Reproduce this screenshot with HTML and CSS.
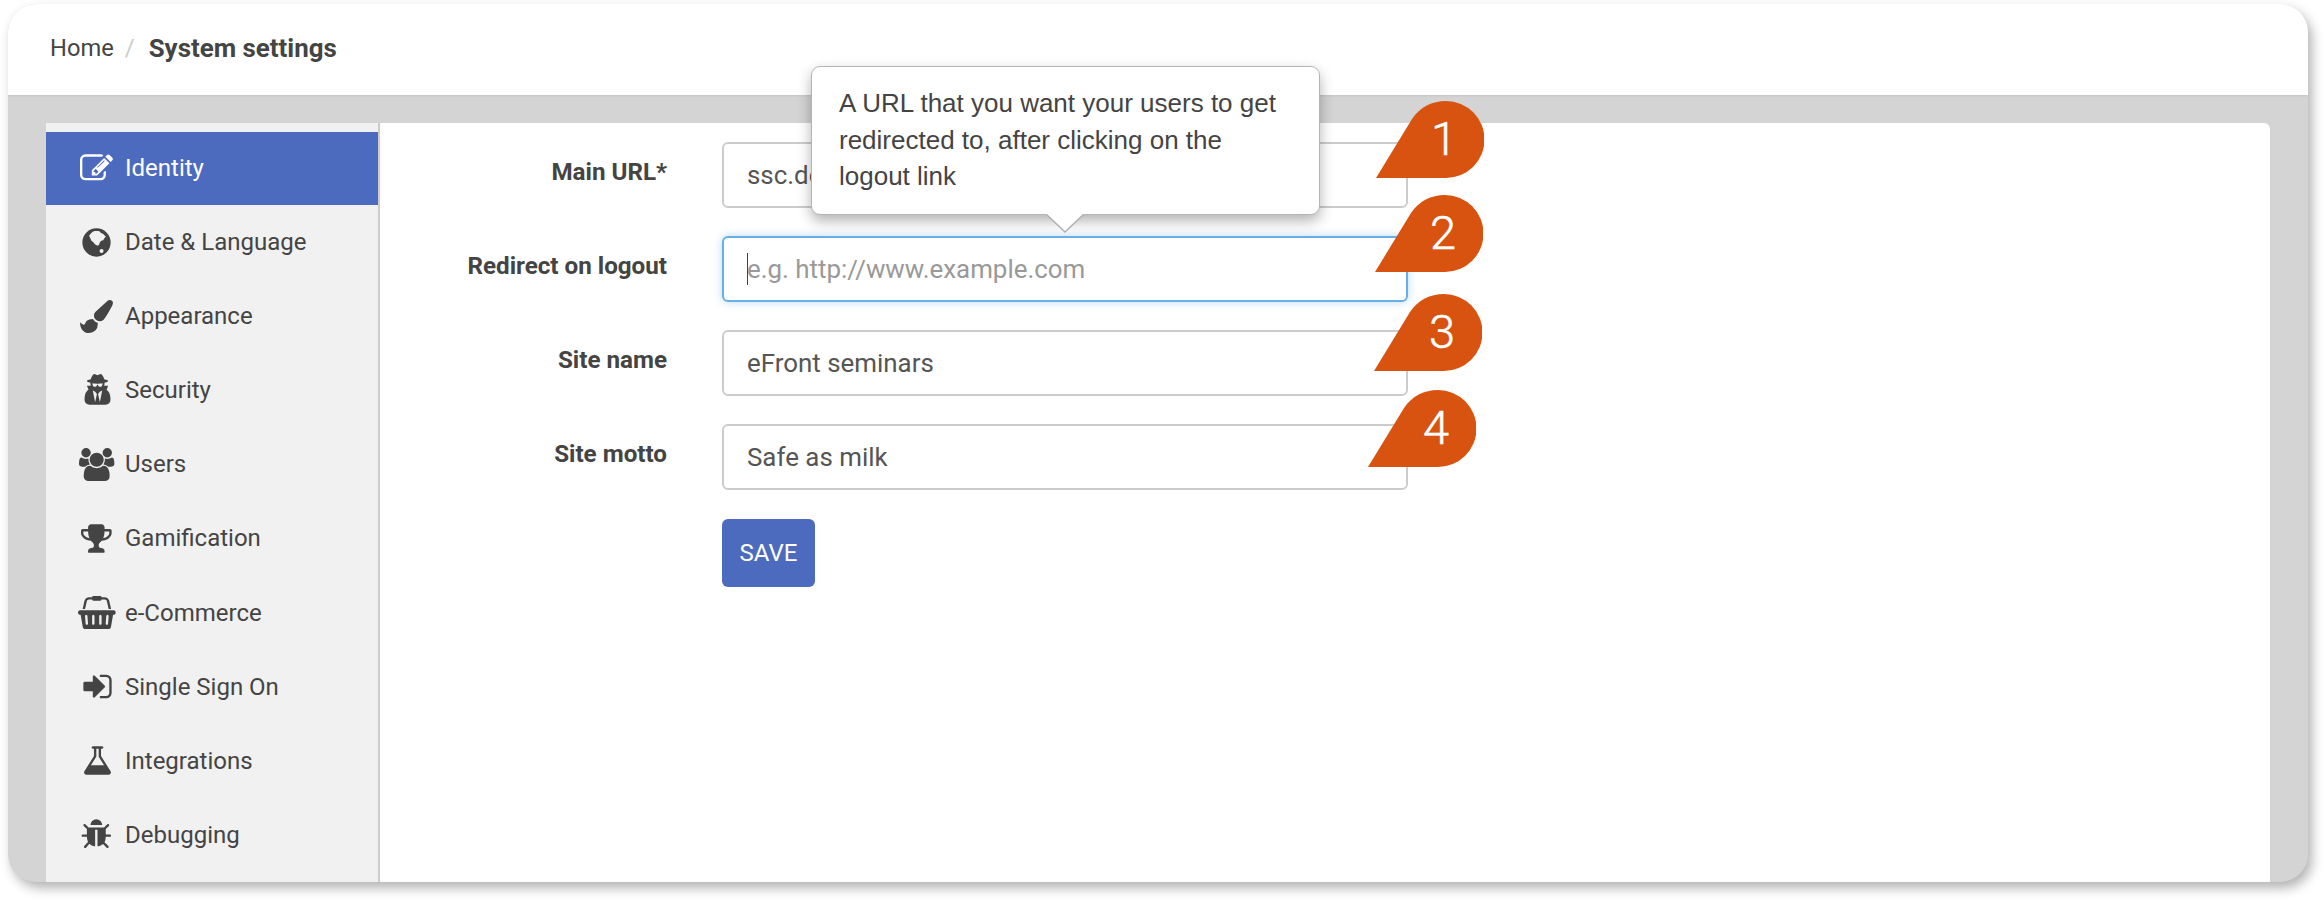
FILE: index.html
```html
<!DOCTYPE html>
<html lang="en">
<head>
<meta charset="utf-8">
<title>System settings</title>
<link rel="stylesheet" href="styles.css">
</head>
<body>
<div class="window">
  <header class="topbar">
    <span class="crumb">Home</span><span class="sep">/</span><strong class="crumb-current">System settings</strong>
  </header>
  <div class="panel">
    <nav class="sidebar">
      <a class="item active"><span class="ico"><svg viewBox="0 0 1792 1792"><path d="M888 1184l116-116-152-152-116 116v56h96v96h56zm440-720q-16-16-33 1l-350 350q-17 17-1 33t33-1l350-350q17-17 1-33zm80 594v190q0 119-84.500 203.500t-203.500 84.500h-832q-119 0-203.500-84.500t-84.500-203.500v-832q0-119 84.500-203.500t203.500-84.500h832q63 0 117 25 15 7 18 23 3 17-9 29l-49 49q-14 14-32 8-23-6-45-6h-832q-66 0-113 47t-47 113v832q0 66 47 113t113 47h832q66 0 113-47t47-113v-126q0-13 9-22l64-64q15-15 35-7t20 29zm-96-738l288 288-672 672h-288v-288zm444 132l-92 92-288-288 92-92q28-28 68-28t68 28l152 152q28 28 28 68t-28 68z"/></svg></span>Identity</a>
      <a class="item"><span class="ico"><svg viewBox="0 0 1792 1792"><path fill-rule="evenodd" d="M896 128a768 768 0 1 0 0 1536a768 768 0 1 0 0-1536zM713 292C830 262 960 262 1079 292L1120 370L1262 438L1408 585L1340 640L1262 768L1150 800L1079 896L1040 990L987 1079L900 1050L804 987L740 900L621 805L560 670L493 530L600 390zM1170 1243a110 110 0 1 1 0 220a110 110 0 1 1 0-220z"/></svg></span>Date &amp; Language</a>
      <a class="item"><span class="ico"><svg viewBox="0 0 1792 1792"><path d="M1615 0q70 0 122.500 46.500t52.500 116.500q0 63-45 151-332 629-465 752-97 91-218 91-126 0-216.500-92.500t-90.500-219.500q0-128 92-212l638-579q59-54 130-54zm-909 1034q39 76 106.500 130t150.500 76l1 71q4 213-129.500 347t-348.500 134q-123 0-218-46.500t-152.500-127.500-86.500-183-29-220q7 5 41 30t62 44.500 59 36.500 46 17q41 0 55-37 25-66 57.500-112.500t69.500-76 88-47.500 103-25.500 125-10.500z"/></svg></span>Appearance</a>
      <a class="item"><span class="ico"><svg viewBox="0 0 1664 1792"><path d="M704 1536l96-448-96-128-128-64zm256 0l128-640-128 64-96 128zm160-1010q-2-4-4-6-10-8-96-8-70 0-167 19-7 2-21 2t-21-2q-97-19-167-19-86 0-96 8-2 2-4 6 2 18 4 27 2 3 7.500 6.500t7.500 10.500q2 4 7.500 20.500t7 20.500 7.500 17 8.500 17 9 14 12 13.500 14 9.500 17.500 8 20.500 4 24.500 2q36 0 59-12.500t32.500-30 14.500-34.500 11.500-29.500 17.500-12.500h12q11 0 17.500 12.500t11.500 29.500 14.500 34.500 32.500 30 59 12.500q13 0 24.500-2t20.500-4 17.500-8 14-9.500 12-13.500 9-14 8.500-17 7.500-17 7-20.500 7.500-20.500q2-7 7.500-10.500t7.500-6.500q2-9 4-27zm416 879q0 121-73 190t-194 69h-874q-121 0-194-69t-73-190q0-61 4.500-118t19-125.500 37.500-123.500 63.500-103.500 93.500-74.500l-90-220h214q-22-64-22-128 0-12 2-32-194-40-194-96 0-57 210-99 17-62 51.500-134t70.500-114q32-37 76-37 30 0 84 31t84 31 84-31 84-31q44 0 76 36 36 42 70.500 114t51.500 134q210 42 210 99 0 56-194 96 7 81-20 160h214l-82 225q63 33 107.500 96.500t65.500 143.500 29 151.500 8 148.500z" transform="translate(64 0)"/></svg></span>Security</a>
      <a class="item"><span class="ico"><svg viewBox="0 0 1920 1792"><path d="M593 896q-162 5-265 128h-134q-82 0-138-40.500t-56-118.500q0-353 124-353 6 0 43.500 21t97.500 42.500 119 21.500q67 0 133-23-5 37-5 66 0 139 81 256zm1071 637q0 120-73 189.500t-194 69.500h-874q-121 0-194-69.500t-73-189.500q0-53 3.500-103.500t14-109 26.500-108.500 43-97.500 62-81 85.500-53.500 111.500-20q10 0 43 21.500t73 48 107 48 135 21.500 135-21.500 107-48 73-48 43-21.500q61 0 111.500 20t85.500 53.500 62 81 43 97.500 26.500 108.500 14 109 3.500 103.500zm-1024-1277q0 106-75 181t-181 75-181-75-75-181 75-181 181-75 181 75 75 181zm704 384q0 159-112.500 271.500t-271.500 112.500-271.500-112.500-112.500-271.500 112.500-271.500 271.500-112.500 271.500 112.500 112.500 271.500zm576 225q0 78-56 118.500t-138 40.500h-134q-103-123-265-128 81-117 81-256 0-29-5-66 66 23 133 23 59 0 119-21.500t97.500-42.500 43.500-21q124 0 124 353zm-128-609q0 106-75 181t-181 75-181-75-75-181 75-181 181-75 181 75 75 181z"/></svg></span>Users</a>
      <a class="item"><span class="ico"><svg viewBox="0 0 1664 1792"><path d="M522 883q-74-162-74-371h-256v96q0 78 94.500 162t235.500 113zm1078-275v-96h-256q0 209-74 371 141-29 235.500-113t94.500-162zm128-128v128q0 71-41.500 143t-112 130-173 97.500-215.500 44.500q-42 54-95 95-38 34-52.500 72.500t-14.500 89.500q0 54 30.500 91t97.500 37q75 0 133.500 45.500t58.500 114.500v64q0 14-9 23t-23 9h-832q-14 0-23-9t-9-23v-64q0-69 58.500-114.500t133.500-45.500q67 0 97.500-37t30.500-91q0-51-14.500-89.500t-52.500-72.500q-53-41-95-95-113-5-215.500-44.500t-173-97.500-112-130-41.500-143v-128q0-40 28-68t68-28h288v-96q0-66 47-113t113-47h576q66 0 113 47t47 113v96h288q40 0 68 28t28 68z" transform="translate(-64 0)"/></svg></span>Gamification</a>
      <a class="item"><span class="ico"><svg viewBox="0 0 2048 1792"><path d="M1920 768q53 0 90.500 37.500t37.500 90.500-37.500 90.500-90.500 37.500h-15l-115 662q-8 46-44 76t-82 30h-1280q-46 0-82-30t-44-76l-115-662h-15q-53 0-90.500-37.500t-37.500-90.500 37.500-90.500 90.500-37.500h1792zm-1435 800q26-2 43.500-22.500t15.500-46.500l-32-416q-2-26-22.500-43.500t-46.500-15.500-43.500 22.500-15.500 46.500l32 416q2 25 20.500 42t43.500 17h5zm411-64v-416q0-26-19-45t-45-19-45 19-19 45v416q0 26 19 45t45 19 45-19 19-45zm384 0v-416q0-26-19-45t-45-19-45 19-19 45v416q0 26 19 45t45 19 45-19 19-45zm352 5l32-416q2-26-15.500-46.500t-43.500-22.500-46.500 15.500-22.500 43.500l-32 416q-2 26 15.500 46.500t43.500 22.500h5q25 0 43.500-17t20.500-42zm-1156-1217l-93 412h-132l101-441q19-88 89-143.500t160-55.500h167q0-26 19-45t45-19h384q26 0 45 19t19 45h167q90 0 160 55.500t89 143.500l101 441h-132l-93-412q-11-44-45.500-72t-79.500-28h-167q0 26-19 45t-45 19h-384q-26 0-45-19t-19-45h-167q-45 0-79.500 28t-45.500 72z"/></svg></span>e-Commerce</a>
      <a class="item"><span class="ico"><svg viewBox="0 0 1664 1792"><path d="M1312 896q0 26-19 45l-544 544q-19 19-45 19t-45-19-19-45v-288h-448q-26 0-45-19t-19-45v-384q0-26 19-45t45-19h448v-288q0-26 19-45t45-19 45 19l544 544q19 19 19 45zm352-352v704q0 119-84.500 203.500t-203.500 84.500h-320q-13 0-22.500-9.500t-9.500-22.500q0-4-1-20t-.5-26.500 3-23.500 10-19.500 20.500-6.500h320q66 0 113-47t47-113v-704q0-66-47-113t-113-47h-288-11-13t-11.500-1-11.500-3-8-5.500-7-9-2-13.500q0-4-1-20t-.5-26.500 3-23.500 10-19.500 20.500-6.500h320q119 0 203.500 84.500t84.500 203.500z"/></svg></span>Single Sign On</a>
      <a class="item"><span class="ico"><svg viewBox="0 0 1664 1792"><path d="M1591 1448q56 89 21.500 152.500t-140.500 63.500h-1152q-106 0-140.500-63.500t21.500-152.500l503-793v-399h-64q-26 0-45-19t-19-45 19-45 45-19h512q26 0 45 19t19 45-19 45-45 19h-64v399zm-779-725l-272 429h712l-272-429-20-31v-436h-128v436z"/></svg></span>Integrations</a>
      <a class="item"><span class="ico"><svg viewBox="0 0 1664 1792"><path d="M1696 960q0 26-19 45t-45 19h-224q0 171-67 290l208 209q19 19 19 45t-19 45q-18 19-45 19t-45-19l-198-197q-5 5-15 13t-42 28.500-65 36.500-82 29-97 13v-896h-128v896q-51 0-101.500-13.500t-87-33-66-39-43.500-32.500l-15-14-183 207q-20 21-48 21-24 0-43-16-19-18-20.500-44.500t15.500-46.500l202-227q-58-114-58-274h-224q-26 0-45-19t-19-45 19-45 45-19h224v-294l-173-173q-19-19-19-45t19-45 45-19 45 19l173 173h844l173-173q19-19 45-19t45 19 19 45-19 45l-173 173v294h224q26 0 45 19t19 45zm-480-576h-640q0-133 93.500-226.500t226.500-93.500 226.500 93.500 93.500 226.500z" transform="translate(-64 0)"/></svg></span>Debugging</a>
    </nav>
    <main class="content">
      <div class="row">
        <label class="label">Main URL*</label>
        <div class="field">
          <input class="input" type="text" value="ssc.demo.efront.com">
          <div class="pin pin-1"><svg class="pin-shape" viewBox="0 0 108 77"><path d="M0 77L36 18C44 6 56 0 70 0A38.500 38.500 0 0 1 70 77Z"/></svg><span class="pin-num">1</span></div>
        </div>
      </div>
      <div class="row">
        <label class="label">Redirect on logout</label>
        <div class="field">
          <input class="input focus" type="text" placeholder="e.g. http://www.example.com">
          <span class="caret"></span>
          <div class="tip">A URL that you want your users to get redirected to, after clicking on the logout link</div>
          <div class="pin pin-2"><svg class="pin-shape" viewBox="0 0 108 77"><path d="M0 77L36 18C44 6 56 0 70 0A38.500 38.500 0 0 1 70 77Z"/></svg><span class="pin-num">2</span></div>
        </div>
      </div>
      <div class="row">
        <label class="label">Site name</label>
        <div class="field">
          <input class="input" type="text" value="eFront seminars">
          <div class="pin pin-3"><svg class="pin-shape" viewBox="0 0 108 77"><path d="M0 77L36 18C44 6 56 0 70 0A38.500 38.500 0 0 1 70 77Z"/></svg><span class="pin-num">3</span></div>
        </div>
      </div>
      <div class="row">
        <label class="label">Site motto</label>
        <div class="field">
          <input class="input" type="text" value="Safe as milk">
          <div class="pin pin-4"><svg class="pin-shape" viewBox="0 0 108 77"><path d="M0 77L36 18C44 6 56 0 70 0A38.500 38.500 0 0 1 70 77Z"/></svg><span class="pin-num">4</span></div>
        </div>
      </div>
      <div class="row">
        <span class="label"></span>
        <button class="save" type="button">SAVE</button>
      </div>
    </main>
  </div>
</div>
</body>
</html>
```

FILE: styles.css
```css
* { box-sizing: border-box; }
html, body { margin: 0; padding: 0; background: #fff; }
body {
  width: 2324px;
  height: 902px;
  overflow: hidden;
  padding: 4px 16px 20px 8px;
  font-family: Roboto, "Liberation Sans", sans-serif;
  font-size: 24px;
  color: #444;
}
.window {
  height: 878px;
  background: #d4d4d4;
  border-radius: 28px;
  box-shadow: 4px 6px 12px rgba(0, 0, 0, .3);
  display: flex;
  flex-direction: column;
  overflow: hidden;
}
.topbar {
  flex: 0 0 91px;
  background: #fff;
  display: flex;
  align-items: center;
  padding: 0 0 4px 42px;
  box-shadow: 0 1px 2px rgba(0, 0, 0, .08);
}
.crumb { color: #444; font-size: 23.7px; }
.sep { color: #ccc; margin: 0 14px 0 11px; }
.crumb-current { font-weight: 700; color: #444; font-size: 25.9px; }
.panel {
  flex: 1;
  margin: 28px 38px 0;
  background: #fff;
  border-radius: 6px 6px 0 0;
  display: flex;
  min-height: 0;
}
.sidebar {
  flex: 0 0 334px;
  background: #f1f1f1;
  border-right: 2px solid #ccc;
  padding-top: 9px;
  display: flex;
  flex-direction: column;
  gap: 1.1px;
}
.item {
  height: 73px;
  flex: none;
  display: flex;
  align-items: center;
  color: #444;
  padding: 0 0 1px 30px;
}
.item.active { background: #4c6bbf; color: #fff; }
.ico {
  flex: 0 0 49px;
  width: 49px;
  padding-right: 8px;
  display: flex;
  align-items: center;
  justify-content: center;
}
.ico svg {
  height: 33px;
  width: auto;
  fill: currentColor;
  overflow: visible;
  display: block;
  flex: none;
}
.content {
  flex: 1;
  padding-top: 19px;
}
.row {
  display: flex;
  gap: 55px;
  margin-bottom: 28px;
}
.label {
  flex: 0 0 287px;
  text-align: right;
  font-weight: 700;
  font-size: 24.2px;
  line-height: 34px;
  padding-top: 13px;
}
.field {
  position: relative;
  flex: 0 0 686px;
  height: 66px;
}
.input {
  display: block;
  width: 100%;
  height: 66px;
  border: 2px solid #ccc;
  border-radius: 6px;
  background: #fff;
  padding: 0 23px;
  font: inherit;
  font-size: 25.9px;
  color: #555;
  outline: none;
}
.input::placeholder { color: #999; opacity: 1; }
.input.focus {
  border-color: #66afe9;
  box-shadow: 0 0 10px rgba(102, 175, 233, .45);
}
.caret {
  position: absolute;
  left: 25px;
  top: 17px;
  width: 1px;
  height: 32px;
  background: #444;
}
.tip {
  position: absolute;
  left: 89px;
  bottom: 87px;
  width: 509px;
  height: 149px;
  padding: 18px 27px;
  background: #fff;
  border: 1px solid #b5b5b5;
  border-radius: 9px;
  box-shadow: 0 6px 14px rgba(0, 0, 0, .3);
  font-family: "Liberation Sans", Arial, sans-serif;
  font-size: 26px;
  line-height: 36.7px;
  color: #444;
  z-index: 2;
}
.tip::before,
.tip::after {
  content: "";
  position: absolute;
  left: 234px;
  border-style: solid;
  border-color: transparent;
  border-width: 18px 19px 0;
}
.tip::before { top: 148px; border-top-color: #b0b0b0; }
.tip::after { top: 146px; border-top-color: #fff; }
.pin {
  position: absolute;
  width: 108px;
  height: 77px;
  display: flex;
  align-items: center;
  justify-content: center;
  padding: 0 0 2px 28px;
  z-index: 3;
}
.pin-1 { left: 654px; top: -41px; }
.pin-2 { left: 653px; top: -41px; }
.pin-3 { left: 652px; top: -36px; }
.pin-4 { left: 646px; top: -34px; }
.pin-shape {
  position: absolute;
  left: 0;
  top: 0;
  width: 108px;
  height: 77px;
  fill: #d7530f;
}
.pin-num {
  position: relative;
  font-weight: 300;
  font-size: 47px;
  line-height: 1;
  color: #fff;
  -webkit-text-stroke: .5px #fff;
}
.save {
  width: 93px;
  height: 68px;
  margin-top: 1px;
  background: #4c6bbf;
  border: 0;
  border-radius: 6px;
  color: #fff;
  font: inherit;
  padding: 0;
}
```
